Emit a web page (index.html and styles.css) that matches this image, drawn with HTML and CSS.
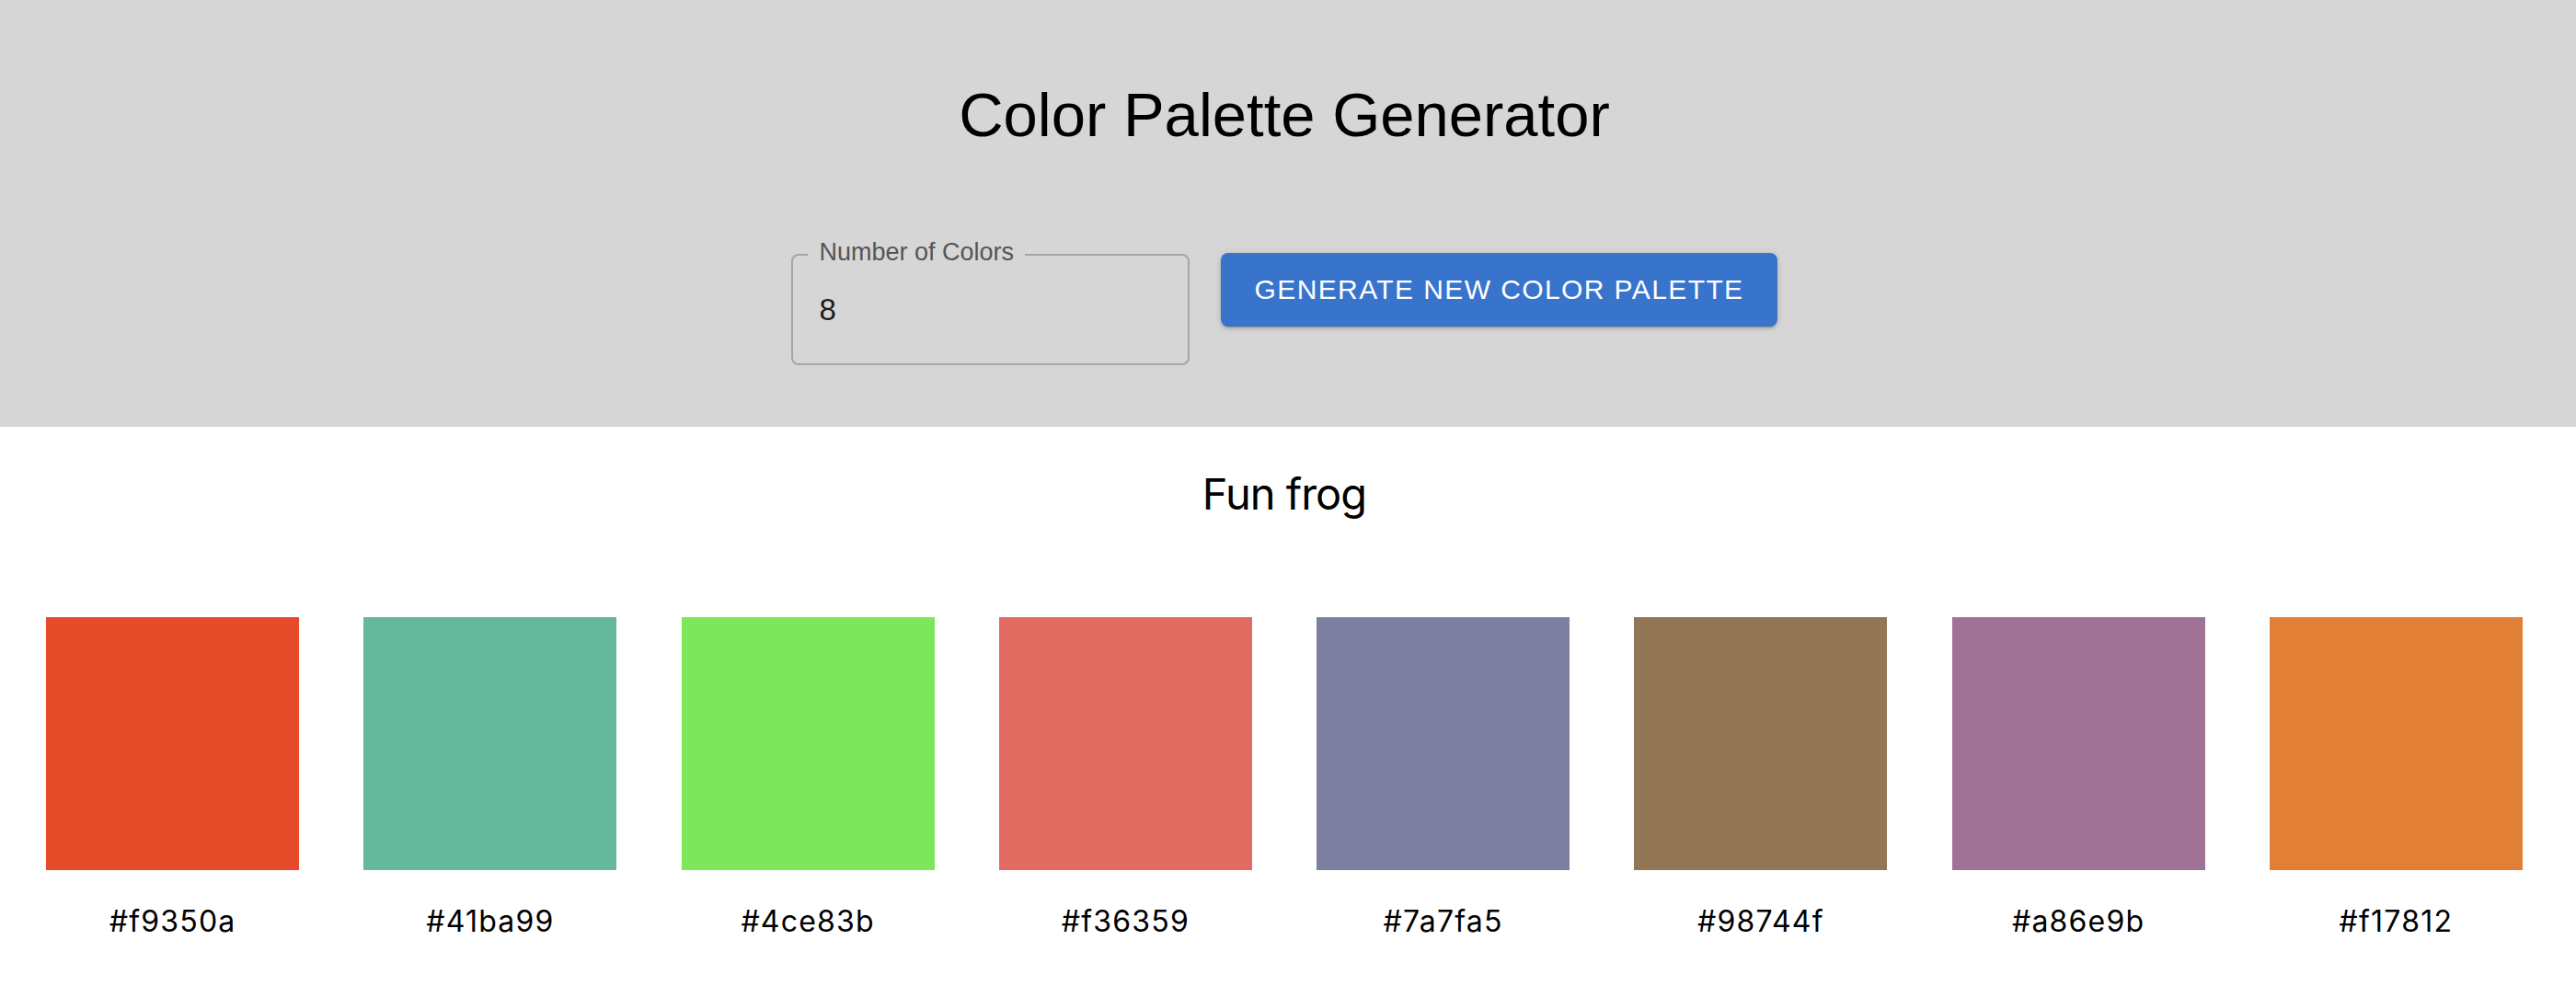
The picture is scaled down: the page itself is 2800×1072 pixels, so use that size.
FILE: index.html
```html
<!DOCTYPE html>
<html lang="en">
<head>
<meta charset="utf-8">
<title>Color Palette Generator</title>
<link rel="stylesheet" href="styles.css">
</head>
<body>
  <header class="header">
    <div class="header-inner">
      <h1 class="title">Color Palette Generator</h1>
      <div class="controls">
        <div class="field">
          <span class="field-label">Number of Colors</span>
          <div class="field-value">8</div>
        </div>
        <button class="btn" type="button">Generate New Color Palette</button>
      </div>
    </div>
  </header>
  <main class="palette">
    <h2 class="palette-name">Fun frog</h2>
    <div class="swatches">
      <div class="swatch-item"><div class="swatch c1"></div><div class="hex">#f9350a</div></div>
      <div class="swatch-item"><div class="swatch c2"></div><div class="hex">#41ba99</div></div>
      <div class="swatch-item"><div class="swatch c3"></div><div class="hex">#4ce83b</div></div>
      <div class="swatch-item"><div class="swatch c4"></div><div class="hex">#f36359</div></div>
      <div class="swatch-item"><div class="swatch c5"></div><div class="hex">#7a7fa5</div></div>
      <div class="swatch-item"><div class="swatch c6"></div><div class="hex">#98744f</div></div>
      <div class="swatch-item"><div class="swatch c7"></div><div class="hex">#a86e9b</div></div>
      <div class="swatch-item"><div class="swatch c8"></div><div class="hex">#f17812</div></div>
    </div>
  </main>
</body>
</html>
```

FILE: styles.css
```css
html, body {
  margin: 0;
  padding: 0;
  background: #ffffff;
}

body {
  font-family: "Liberation Sans", Arial, sans-serif;
  color: #000;
}

.header {
  background: #d6d6d6;
  height: 464px;
}

.header-inner {
  margin-right: 8px;
  padding-top: 85px;
  display: flex;
  flex-direction: column;
  align-items: center;
}

.title {
  margin: 0;
  font-family: "Liberation Sans", Arial, sans-serif;
  font-weight: 400;
  font-size: 67px;
  line-height: 80px;
  color: #000;
}

.controls {
  margin-top: 110px;
  display: flex;
  align-items: flex-start;
  gap: 34px;
}

.field {
  position: relative;
  box-sizing: border-box;
  width: 433px;
  height: 121px;
  margin-top: 1px;
  border: 2px solid #a6a6a6;
  border-radius: 8px;
  padding: 39px 28px 0;
}

.field-label {
  position: absolute;
  left: 16px;
  top: -20px;
  padding: 0 12px;
  background: #d6d6d6;
  font-size: 27px;
  line-height: 32px;
  color: #555555;
}

.field-value {
  font-size: 33px;
  line-height: 40px;
  color: #1c1c1c;
}

.btn {
  box-sizing: border-box;
  height: 80px;
  padding: 0 36px;
  border: none;
  border-radius: 8px;
  background: #3874cb;
  color: #ffffff;
  font-family: "Liberation Sans", Arial, sans-serif;
  font-size: 30px;
  letter-spacing: 1.4px;
  text-transform: uppercase;
  box-shadow: 0 3px 2px -2px rgba(0,0,0,0.22), 0 2px 4px 0 rgba(0,0,0,0.14), 0 1px 8px 0 rgba(0,0,0,0.10);
  cursor: pointer;
}

.palette {
  padding-top: 44px;
}

.palette-name {
  margin: 0 8px 0 0;
  text-align: center;
  font-family: Inter, "Noto Sans", sans-serif;
  font-weight: 400;
  font-size: 47px;
  line-height: 57px;
  letter-spacing: -1px;
}

.swatches {
  margin-top: 106px;
  padding: 0 23px 0 15px;
  display: grid;
  grid-template-columns: repeat(8, 1fr);
}

.swatch-item {
  display: flex;
  flex-direction: column;
  align-items: center;
}

.swatch {
  width: 275px;
  height: 275px;
}

.hex {
  margin-top: 37px;
  font-family: Inter, "Noto Sans", sans-serif;
  font-size: 32px;
  line-height: 38px;
  letter-spacing: 1.2px;
}

.c1 { background: #e54a29; }
.c2 { background: #66b89d; }
.c3 { background: #7de75b; }
.c4 { background: #e26c61; }
.c5 { background: #7c7fa2; }
.c6 { background: #937655; }
.c7 { background: #a07296; }
.c8 { background: #e07f35; }
```
